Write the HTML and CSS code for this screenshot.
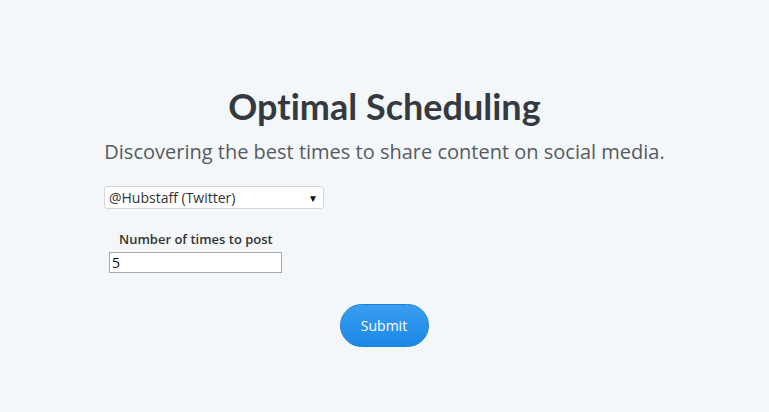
FILE: index.html
```html
<!DOCTYPE html>
<html>
<head>
<meta charset="utf-8">
<link rel="stylesheet" href="styles.css">
</head>
<body>
<main class="page">
  <h1 class="title">Optimal Scheduling</h1>
  <p class="subtitle">Discovering the best times to share content on social media.</p>
  <form class="form">
    <div class="select">
      <span class="select-text">@Hubstaff (Twitter)</span>
      <span class="caret">&#9660;</span>
    </div>
    <div class="field">
      <label class="label">Number of times to post</label>
      <div class="input">5</div>
    </div>
    <div class="actions">
      <button type="button" class="submit">Submit</button>
    </div>
  </form>
</main>
</body>
</html>
```
FILE: styles.css
```css
html, body {
  margin: 0;
  padding: 0;
  background: #f4f7fa;
}
.page {
  width: 561px;
  margin: 0 auto;
  padding-top: 84px;
  font-family: "Open Sans", sans-serif;
}
.title {
  margin: 0;
  text-align: center;
  font-family: Lato, sans-serif;
  font-weight: 700;
  font-size: 36px;
  line-height: 44px;
  color: #343a40;
  font-variant-ligatures: none;
}
.subtitle {
  margin: 0;
  margin-top: 10px;
  text-align: center;
  font-size: 20px;
  line-height: 28px;
  color: #555b61;
  white-space: nowrap;
}
.form {
  margin-top: 20px;
}
.select {
  height: 21px;
  border: 1px solid #d3d6da;
  border-radius: 3px;
  background: #fff;
  display: flex;
  align-items: center;
  justify-content: space-between;
  padding: 0 0 0 4px;
  box-sizing: content-box;
  width: 214px;
}
.select-text {
  font-size: 14px;
  color: #333;
}
.caret {
  font-size: 10px;
  color: #111;
  margin-right: 5px;
}
.field {
  margin-top: 21px;
  padding-left: 5px;
}
.label {
  display: block;
  padding-left: 10px;
  font-size: 13px;
  font-weight: 600;
  color: #333;
  line-height: 18px;
}
.input {
  margin-top: 4px;
  width: 169px;
  height: 19px;
  border: 1px solid #a9a9a9;
  background: #fff;
  font-size: 14px;
  line-height: 19px;
  padding-left: 2px;
  color: #111;
}
.actions {
  margin-top: 31px;
  display: flex;
  justify-content: center;
  margin-left: -1px;
}
.submit {
  width: 89px;
  height: 43px;
  border: 1px solid #1f7fd4;
  border-radius: 22px;
  background: linear-gradient(#3a9ef0, #1b88e6);
  color: #fff;
  font-family: "Open Sans", sans-serif;
  font-size: 14px;
  padding: 0;
}
```
